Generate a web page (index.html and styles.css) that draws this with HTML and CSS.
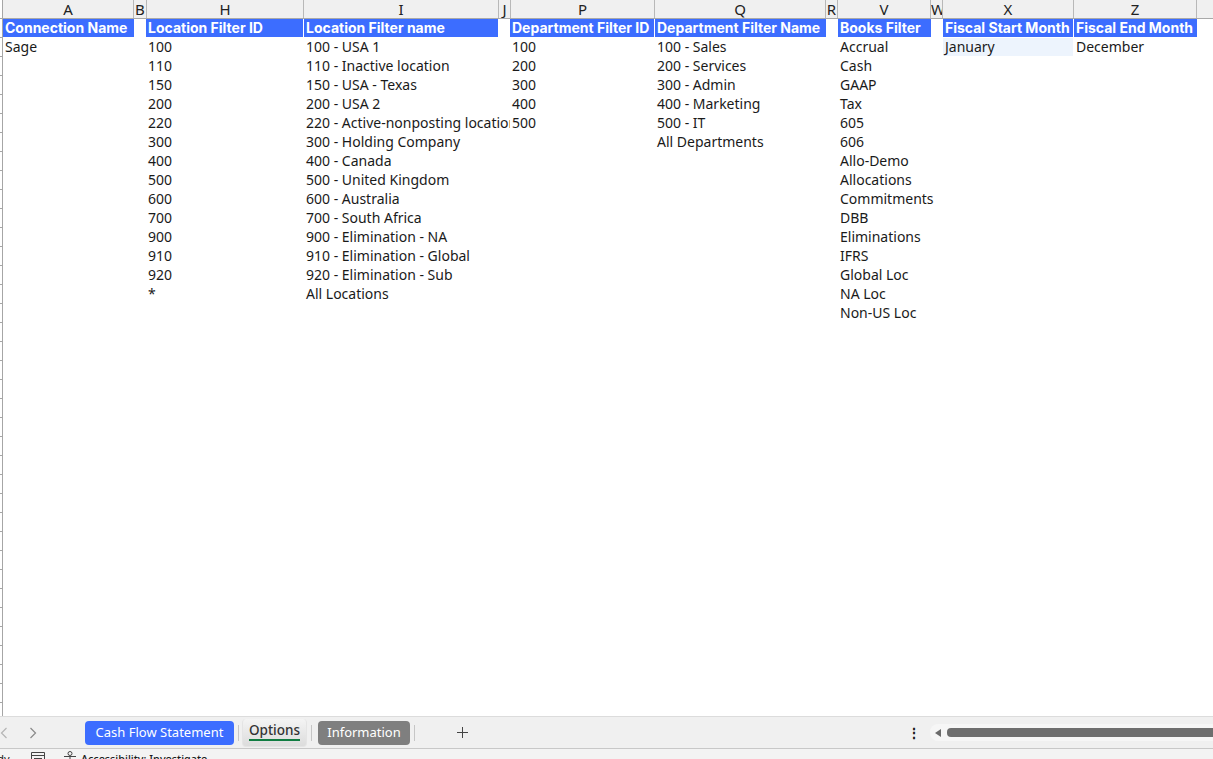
FILE: index.html
```html
<!DOCTYPE html>
<html lang="en">
<head>
    <meta charset="UTF-8">
    <meta name="viewport" content="width=device-width, initial-scale=1.0">
    <title>Options</title>
    <link rel="stylesheet" href="styles.css">
</head>
<body>
    <div class="sheet">
        <div class="col-heads">
            <div class="col-head w-a">A</div>
            <div class="col-head w-b">B</div>
            <div class="col-head w-h">H</div>
            <div class="col-head w-i">I</div>
            <div class="col-head w-j">J</div>
            <div class="col-head w-p">P</div>
            <div class="col-head w-q">Q</div>
            <div class="col-head w-r">R</div>
            <div class="col-head w-v">V</div>
            <div class="col-head w-w">W</div>
            <div class="col-head w-x">X</div>
            <div class="col-head w-z">Z</div>
        </div>

        <div class="grid">
            <div class="col w-a">
                <div class="cell title">Connection Name</div>
                <div class="cell">Sage</div>
            </div>
            <div class="col w-b"></div>
            <div class="col w-h">
                <div class="cell title title-gap">Location Filter ID</div>
                <div class="cell">100</div>
                <div class="cell">110</div>
                <div class="cell">150</div>
                <div class="cell">200</div>
                <div class="cell">220</div>
                <div class="cell">300</div>
                <div class="cell">400</div>
                <div class="cell">500</div>
                <div class="cell">600</div>
                <div class="cell">700</div>
                <div class="cell">900</div>
                <div class="cell">910</div>
                <div class="cell">920</div>
                <div class="cell">*</div>
            </div>
            <div class="col w-i">
                <div class="cell title title-gap">Location Filter name</div>
                <div class="cell">100 - USA 1</div>
                <div class="cell">110 - Inactive location</div>
                <div class="cell">150 - USA - Texas</div>
                <div class="cell">200 - USA 2</div>
                <div class="cell spill">220 - Active-nonposting location</div>
                <div class="cell">300 - Holding Company</div>
                <div class="cell">400 - Canada</div>
                <div class="cell">500 - United Kingdom</div>
                <div class="cell">600 - Australia</div>
                <div class="cell">700 - South Africa</div>
                <div class="cell">900 - Elimination - NA</div>
                <div class="cell">910 - Elimination - Global</div>
                <div class="cell">920 - Elimination - Sub</div>
                <div class="cell">All Locations</div>
            </div>
            <div class="col w-j"></div>
            <div class="col w-p">
                <div class="cell title title-gap">Department Filter ID</div>
                <div class="cell">100</div>
                <div class="cell">200</div>
                <div class="cell">300</div>
                <div class="cell">400</div>
                <div class="cell">500</div>
            </div>
            <div class="col w-q">
                <div class="cell title">Department Filter Name</div>
                <div class="cell">100 - Sales</div>
                <div class="cell">200 - Services</div>
                <div class="cell">300 - Admin</div>
                <div class="cell">400 - Marketing</div>
                <div class="cell">500 - IT</div>
                <div class="cell">All Departments</div>
            </div>
            <div class="col w-r"></div>
            <div class="col w-v">
                <div class="cell title">Books Filter</div>
                <div class="cell">Accrual</div>
                <div class="cell">Cash</div>
                <div class="cell">GAAP</div>
                <div class="cell">Tax</div>
                <div class="cell">605</div>
                <div class="cell">606</div>
                <div class="cell">Allo-Demo</div>
                <div class="cell">Allocations</div>
                <div class="cell spill">Commitments</div>
                <div class="cell">DBB</div>
                <div class="cell">Eliminations</div>
                <div class="cell">IFRS</div>
                <div class="cell">Global Loc</div>
                <div class="cell">NA Loc</div>
                <div class="cell">Non-US Loc</div>
            </div>
            <div class="col w-w"></div>
            <div class="col w-x">
                <div class="cell title title-gap">Fiscal Start Month</div>
                <div class="cell pale">January</div>
            </div>
            <div class="col w-z">
                <div class="cell title">Fiscal End Month</div>
                <div class="cell">December</div>
            </div>
        </div>
    </div>

    <div class="tabbar">
        <div class="tab-nav">
            <svg width="8" height="12" viewBox="0 0 8 12"><path d="M6.5 1 1.5 6l5 5" fill="none" stroke="#b5b5b5" stroke-width="1.2"/></svg>
            <svg width="8" height="12" viewBox="0 0 8 12"><path d="M1.5 1l5 5-5 5" fill="none" stroke="#8a8a8a" stroke-width="1.2"/></svg>
        </div>
        <div class="tab tab-blue">Cash Flow Statement</div>
        <div class="tab-sep"></div>
        <div class="tab tab-active"><span class="tab-active-label">Options</span></div>
        <div class="tab-sep"></div>
        <div class="tab tab-grey">Information</div>
        <div class="tab-sep"></div>
        <svg class="tab-add" width="13" height="13" viewBox="0 0 13 13"><path d="M6.5 1v11M1 6.5h11" fill="none" stroke="#444" stroke-width="1"/></svg>
        <div class="tab-more">⋮</div>
        <div class="hscroll">
            <svg width="8" height="10" viewBox="0 0 8 10"><path d="M7 1v8L1 5z" fill="#6b6b6b"/></svg>
            <div class="hscroll-thumb"></div>
        </div>
    </div>

    <div class="statusbar">
        <span class="status-ready">Ready</span>
        <svg width="14" height="14" viewBox="0 0 14 14"><path d="M.5 1.5h13v11H.5zM.5 4.5h13M3 7.5h8M3 10h8" fill="none" stroke="#444" stroke-width="1"/></svg>
        <svg class="status-person" width="14" height="14" viewBox="0 0 14 14"><circle cx="7" cy="2.5" r="2" fill="none" stroke="#444"/><path d="M1 5.5h12M7 5.5v7M7 8.5l-3 4M7 8.5l3 4" fill="none" stroke="#444"/></svg>
        <span class="status-text">Accessibility: Investigate</span>
    </div>
</body>
</html>
```

FILE: styles.css
```css
* {
    margin: 0;
    padding: 0;
    box-sizing: border-box;
}

html, body {
    height: 100%;
    overflow: hidden;
}

body {
    width: 1213px;
    height: 759px;
    display: flex;
    flex-direction: column;
    font-family: 'Noto Sans', Inter, sans-serif;
    font-size: 14px;
    color: #1a1a1a;
    background: #fff;
}

.sheet {
    height: 716px;
    overflow: hidden;
    padding-left: 3px;
    /* row header strip, mostly cut off: ticks every 19px */
    background:
        linear-gradient(#a6a6a6, #a6a6a6) 2px 0 / 1px 100% no-repeat,
        repeating-linear-gradient(to bottom, transparent 0, transparent 18px, #a6a6a6 18px, #a6a6a6 19px) 0 0 / 2px 100% no-repeat,
        #fff;
}

.col-heads {
    display: flex;
    height: 19px;
    background: #f0f0f0;
    border-bottom: 1px solid #a9a9a9;
}

.col-head {
    height: 18px;
    line-height: 18px;
    text-align: center;
    font-size: 15px;
    color: #222;
    border-right: 1px solid #b8b8b8;
    overflow: hidden;
    flex: none;
}

.w-a { width: 131px; }
.w-b { width: 13px; }
.w-h { width: 157px; }
.w-i { width: 195px; }
.w-j { width: 12px; }
.w-p { width: 144px; }
.w-q { width: 171px; }
.w-r { width: 12px; }
.w-v { width: 93px; }
.w-w { width: 12px; }
.w-x { width: 131px; }
.w-z { width: 123px; }

/* the blue bars sit 1px left of the column heading here */
.grid .w-b { width: 12px; }
.grid .w-h { width: 158px; }
.grid .w-j { width: 11px; }
.grid .w-p { width: 145px; }

.grid {
    display: flex;
}

.col {
    flex: none;
}

.cell {
    height: 19px;
    line-height: 18px;
    padding-left: 2px;
    white-space: nowrap;
    overflow: hidden;
}

/* text running on over the empty narrow column next to it */
.spill {
    width: calc(100% + 11px);
}

.title {
    height: 18px;
    line-height: 18px;
    margin-bottom: 1px;
    background: #3c6dff;
    color: #fff;
    font-family: Inter, 'Noto Sans', sans-serif;
    font-weight: 700;
}

.title-gap {
    margin-right: 1px;
}

.pale {
    height: 18px;
    margin-right: 1px;
    background: #edf4fd;
}

.tabbar {
    height: 33px;
    display: flex;
    align-items: center;
    background: #f0f0f0;
    border-top: 1px solid #dcdcdc;
    border-bottom: 1px solid #c8c8c8;
}

.tab-nav {
    width: 85px;
    display: flex;
    gap: 21px;
    flex: none;
}

.tab {
    font-size: 13px;
    flex: none;
    text-align: center;
}

.tab-blue {
    width: 149px;
    height: 24px;
    line-height: 23px;
    background: #3c6dff;
    color: #fff;
    border-radius: 4px;
}

.tab-sep {
    width: 1px;
    height: 16px;
    background: #c6c6c6;
    margin: 0 4px;
    flex: none;
}

.tab-active {
    width: 65px;
    height: 28px;
    background: linear-gradient(#f4f4f4, #dcdcdc);
    border: 1px solid #e4e4e4;
    border-top: 0;
    border-radius: 4px;
    margin-left: -1px;
    padding-top: 2px;
    font-size: 13.5px;
    font-weight: 500;
}

.tab-active-label {
    display: inline-block;
    line-height: 18px;
    border-bottom: 2px solid #107c41;
    color: #333;
}

.tab-grey {
    width: 92px;
    height: 24px;
    line-height: 23px;
    background: #7f7f7f;
    color: #fff;
    border-radius: 4px;
    margin-left: 2px;
}

.tab-add {
    margin-left: 37px;
    flex: none;
}

.tab-more {
    margin-left: 438px;
    width: 14px;
    text-align: center;
    font-size: 14px;
    font-weight: 700;
    flex: none;
}

.hscroll {
    margin-left: 9px;
    flex: 1;
    height: 17px;
    display: flex;
    align-items: center;
    gap: 5px;
    padding-left: 4px;
    background: #f6f6f6;
    border-radius: 8px 0 0 8px;
}

.hscroll-thumb {
    flex: 1;
    height: 9px;
    background: #6e6e6e;
    border-radius: 4px 0 0 4px;
}

.statusbar {
    flex: 1;
    display: flex;
    align-items: flex-start;
    background: #f3f3f3;
    font-size: 11px;
    overflow: hidden;
}

.status-ready {
    margin-left: -22px;
    width: 53px;
    flex: none;
    padding-top: 2px;
}

.statusbar svg {
    flex: none;
    margin-top: 2px;
}

.status-person {
    margin-left: 18px;
}

.status-text {
    margin-left: 4px;
    padding-top: 2px;
    font-size: 10.8px;
    font-weight: 500;
}
```
